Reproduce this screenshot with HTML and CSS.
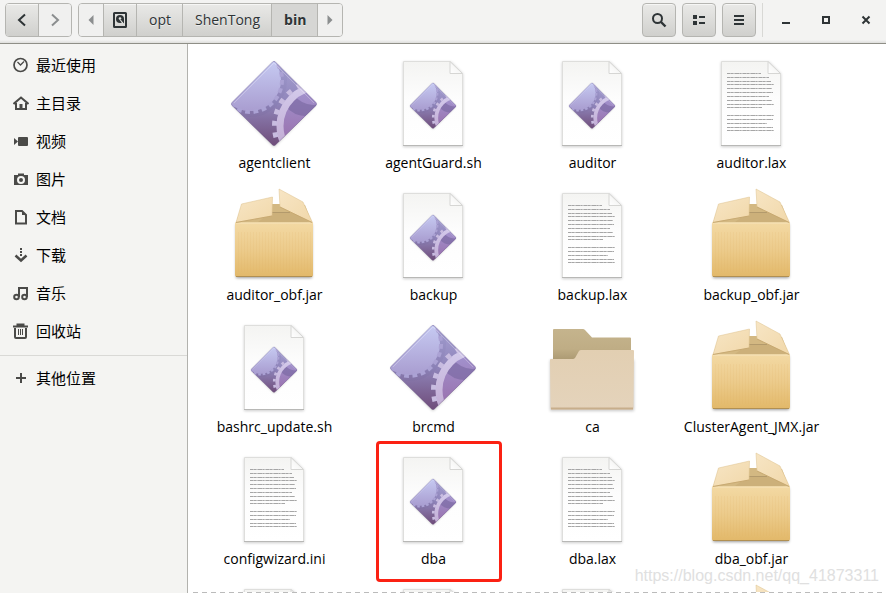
FILE: index.html
```html
<!DOCTYPE html>
<html lang="zh-CN">
<head>
<meta charset="utf-8">
<title>bin</title>
<link rel="stylesheet" href="styles.css">
</head>
<body>
<svg class="sprite" width="0" height="0" aria-hidden="true">
  <defs>
    <linearGradient id="g-dark" x1="0" y1="0" x2="0" y2="1"><stop offset="0" stop-color="#aaa6d8"/><stop offset=".5" stop-color="#8f84b9"/><stop offset="1" stop-color="#6a4470"/></linearGradient>
    <linearGradient id="g-light" x1="0" y1="0" x2="0" y2="1"><stop offset=".2" stop-color="#c6caf2"/><stop offset="1" stop-color="#a99dd0"/></linearGradient>
    <linearGradient id="g-ring" x1="0" y1="0" x2="0" y2="1"><stop offset="0" stop-color="#d3caeb"/><stop offset="1" stop-color="#bda3cd"/></linearGradient>
    <linearGradient id="g-core" x1="0" y1="0" x2="0" y2="1"><stop offset="0" stop-color="#a294cf"/><stop offset="1" stop-color="#96629f"/></linearGradient>
    <linearGradient id="g-paper" x1="0" y1="0" x2="0" y2="1"><stop offset="0" stop-color="#f4f4f2"/><stop offset=".45" stop-color="#fdfdfd"/><stop offset="1" stop-color="#fff"/></linearGradient>
    <linearGradient id="g-fold" x1="0" y1="1" x2="1" y2="0"><stop offset="0" stop-color="#fff"/><stop offset=".5" stop-color="#f6f6f5"/><stop offset="1" stop-color="#ddd"/></linearGradient>
    <linearGradient id="g-box" x1="0" y1="0" x2="0" y2="1"><stop offset="0" stop-color="#f3d9a3"/><stop offset=".5" stop-color="#eccb8b"/><stop offset="1" stop-color="#e2b869"/></linearGradient>
    <linearGradient id="g-flap" x1="0" y1="0" x2="1" y2="1"><stop offset="0" stop-color="#f7e5c4"/><stop offset="1" stop-color="#f1d8aa"/></linearGradient>
    <linearGradient id="g-back" x1="0" y1="0" x2="0" y2="1"><stop offset="0" stop-color="#c5b48d"/><stop offset=".6" stop-color="#bfad85"/><stop offset="1" stop-color="#a8966f"/></linearGradient>
    <linearGradient id="g-front" x1="0" y1="0" x2="0" y2="1"><stop offset="0" stop-color="#e2cfb2"/><stop offset="1" stop-color="#e4d3bb"/></linearGradient>
    <pattern id="corrugated" width="3" height="8" patternUnits="userSpaceOnUse"><path d="M.5 0v8" stroke="#d9ad5e" stroke-opacity=".1"/></pattern>
    <clipPath id="diamond-clip"><path d="M46.500 6Q48 4.500 49.500 6L90 46.500Q91 48 90 49.500L49.500 89Q48 90.500 46.500 89L6 49.500Q5 48 6 46.500Z"/></clipPath>
    <filter id="soft" x="-20%" y="-20%" width="140%" height="140%"><feGaussianBlur stdDeviation="1.5"/></filter>
  </defs>
  <symbol id="program" viewBox="0 0 96 96">
    <path d="M48 6L90 48.500L48 91L6 48.500Z" fill="#000" opacity=".25" filter="url(#soft)"/>
    <g clip-path="url(#diamond-clip)">
      <path d="M0 0h96v96H0z" fill="url(#g-dark)"/>
      <circle cx="24" cy="24" r="37" fill="#5d5090" opacity=".06"/>
      <circle cx="24" cy="24" r="31" fill="url(#g-light)"/>
      <circle cx="24" cy="24" r="32" fill="none" stroke="#aba2d4" stroke-width="4" stroke-dasharray="4.8 3.578"/>
      <circle cx="93" cy="70" r="38" fill="url(#g-core)"/>
      <path d="M59 50Q72 65 94 58V48Q78 52 67 38Z" fill="#77659f" opacity=".6"/>
      <path d="M73 28Q81 40 96 40V20Z" fill="#a99cda"/>
      <circle cx="93" cy="70" r="39" fill="none" stroke="url(#g-ring)" stroke-width="7"/>
      <circle cx="93" cy="70" r="44.500" fill="none" stroke="#c8bce0" stroke-width="5" stroke-dasharray="5 6.650"/>
    </g>
    <path d="M46.500 6Q48 4.500 49.500 6L90 46.500Q91 48 90 49.500L49.500 89Q48 90.500 46.500 89L6 49.500Q5 48 6 46.500Z" fill="none" stroke="#645383" stroke-opacity=".25"/>
    <path d="M8 47L48 7L88 47" fill="none" stroke="#fff" stroke-opacity=".25"/>
  </symbol>
  <symbol id="paper" viewBox="0 0 96 96">
    <path d="M18 6H66L78 18V91H18Z" fill="#000" opacity=".2" filter="url(#soft)"/>
    <path d="M18.500 5.500H65L77.500 18V89.500H18.500Z" fill="url(#g-paper)" stroke="#dededc"/>
    <path d="M18 89.500H78" stroke="#b8b8b6"/>
    <path d="M65 5.500V17.500H77.500Z" fill="url(#g-fold)" stroke="#d6d6d4"/>
  </symbol>
  <symbol id="script" viewBox="0 0 96 96">
    <use href="#paper" width="96" height="96"/>
    <use href="#program" x="22" y="24" width="52" height="52"/>
  </symbol>
  <symbol id="document" viewBox="0 0 96 96">
    <use href="#paper" width="96" height="96"/>
    <g fill="none" stroke="#c2c2c2">
      <path d="M24 17.500h34M24 21.500h42M24 25.500h44M24 28.500h47M24 32.500h45M24 36.500h46M24 40.500h42M24 44.500h45M24 48.500h47M24 51.500h35M24 59.500h47M24 63.500h46M24 67.500h40M24 71.500h46M24 74.500h47"/>
      <path stroke="#a6a6a6" stroke-dasharray="3 1 2 2 4 1 1 2" d="M24 17.500h34M24 21.500h42M24 25.500h44M24 28.500h47M24 32.500h45M24 36.500h46M24 40.500h42M24 44.500h45M24 48.500h47M24 51.500h35M24 59.500h47M24 63.500h46M24 67.500h40M24 71.500h46M24 74.500h47"/>
    </g>
  </symbol>
  <symbol id="package" viewBox="0 0 96 96">
    <path d="M10 36H86V90H10Z" fill="#000" opacity=".4" filter="url(#soft)"/>
    <path d="M16 17L46 16H56L79 17L86 35H10Z" fill="#d3b882"/>
    <path d="M32 34L46 24H66L83 34Z" fill="#ccb07a"/>
    <path d="M44 24.500H64" stroke="#b39a6c"/>
    <path d="M9 34.500H87V87Q87 89 85 89H11Q9 89 9 87Z" fill="url(#g-box)"/>
    <path d="M10 44H86V84H10Z" fill="url(#corrugated)"/>
    <path d="M9.500 35H86.500" stroke="#f7e4bb"/>
    <path d="M10 88.500H86" stroke="#b08f52"/>
    <path d="M15.500 16L46.500 9L46 28L10 34.500Z" fill="url(#g-flap)" stroke="#dcc08d" stroke-width=".5"/>
    <path d="M53 1L77 14L86.500 34.500L54 19Z" fill="url(#g-flap)" stroke="#dcc08d" stroke-width=".5"/>
    <path d="M10 34.500L46 28M54 19L86 34.500" stroke="#c2a26a" stroke-width=".8"/>
  </symbol>
  <symbol id="folder" viewBox="0 0 96 96">
    <path d="M6 40H90V91H6Z" fill="#000" opacity=".22" filter="url(#soft)"/>
    <path d="M9 10Q9 9 10 9H39Q40 9 41 10L48 17.500H86Q87 17.500 87 18.500V42H9Z" fill="url(#g-back)"/>
    <path d="M6 40Q6 39 7 39H29Q30 39 31 38L35 31Q36 30 37 30H89Q90 30 90 31L89.500 88Q89.500 89.500 88 89.500H8Q6.500 89.500 6.500 88Z" fill="url(#g-front)"/>
    <path d="M7 88.500H89" stroke="#c7ae8b" stroke-width="2"/>
  </symbol>
</svg>

<header class="toolbar">
  <div class="group">
    <button class="btn raised" aria-label="后退"><svg width="16" height="16" viewBox="0 0 16 16"><path d="M11 2.500L5 8l6 5.500" fill="none" stroke="#2e3436" stroke-width="2"/></svg></button>
    <button class="btn" aria-label="前进"><svg width="16" height="16" viewBox="0 0 16 16"><path d="M5 2.500L11 8l-6 5.500" fill="none" stroke="#8b8e8f" stroke-width="2"/></svg></button>
  </div>
  <nav class="group path">
    <button class="btn arrow" aria-label="向左"><svg width="16" height="16" viewBox="0 0 16 16"><path d="M10.500 3v10L5.500 8z" fill="#8b8e8f"/></svg></button>
    <button class="btn raised" aria-label="根目录"><svg width="16" height="16" viewBox="0 0 16 16"><rect x="2" y="1" width="12" height="14" rx=".5" fill="none" stroke="#2e3436" stroke-width="2"/><circle cx="8" cy="7" r="4" fill="#2e3436"/><circle cx="8" cy="6.500" r="1.300" fill="#e4e4e2"/><path d="M8 7l4 5V7z" fill="#2e3436"/><path d="M8 7.500l3.500 4.500" stroke="#e4e4e2" stroke-width="1.200"/></svg></button>
    <button class="btn raised text">opt</button>
    <button class="btn raised text">ShenTong</button>
    <button class="btn current text">bin</button>
    <button class="btn arrow" aria-label="向右"><svg width="16" height="16" viewBox="0 0 16 16"><path d="M5.500 3v10l5-5z" fill="#8b8e8f"/></svg></button>
  </nav>
  <div class="tools">
    <button class="btn raised single" aria-label="搜索"><svg width="16" height="16" viewBox="0 0 16 16"><circle cx="6.500" cy="6.500" r="4.500" fill="none" stroke="#2e3436" stroke-width="2"/><path d="M10 10l4.500 4.500" stroke="#2e3436" stroke-width="2.400"/></svg></button>
    <button class="btn raised single" aria-label="列表视图"><svg width="16" height="16" viewBox="0 0 16 16"><path d="M2 3h4v4H2zM2 9h4v4H2zM8 4h6v2H8zM8 10h6v2H8z" fill="#2e3436"/></svg></button>
    <button class="btn raised single" aria-label="菜单"><svg width="16" height="16" viewBox="0 0 16 16"><path d="M3 3h10v2H3zM3 7h10v2H3zM3 11h10v2H3z" fill="#2e3436"/></svg></button>
  </div>
  <div class="window-controls">
    <button class="win" aria-label="最小化"><svg width="16" height="16" viewBox="0 0 16 16"><path d="M4 10h8v2H4z" fill="#2e3436"/></svg></button>
    <button class="win" aria-label="最大化"><svg width="16" height="16" viewBox="0 0 16 16"><path d="M5 5h6v6H5z" fill="none" stroke="#2e3436" stroke-width="2"/></svg></button>
    <button class="win" aria-label="关闭"><svg width="16" height="16" viewBox="0 0 16 16"><path d="M4.500 4.500l7 7M11.500 4.500l-7 7" stroke="#2e3436" stroke-width="2"/></svg></button>
  </div>
</header>

<div class="content">
  <aside class="sidebar">
    <a class="place" href="#"><svg width="16" height="16" viewBox="0 0 16 16"><circle cx="7.500" cy="8" r="6.500" fill="none" stroke="#4a4a48" stroke-width="1.700"/><path d="M4.500 5l3 3L11 4.500" fill="none" stroke="#4a4a48" stroke-width="1.300"/></svg>最近使用</a>
    <a class="place" href="#"><svg width="16" height="16" viewBox="0 0 16 16"><path d="M.5 9L8 2.500L15.500 9" fill="none" stroke="#4a4a48" stroke-width="2"/><path d="M3 8v6h10V8" fill="none" stroke="#4a4a48" stroke-width="2"/><path d="M6.500 9h3v5h-3z" fill="#4a4a48"/></svg>主目录</a>
    <a class="place" href="#"><svg width="16" height="16" viewBox="0 0 16 16"><rect x="5" y="4" width="10" height="9" rx="1" fill="#4a4a48"/><path d="M1 5l4 3.500L1 12z" fill="#4a4a48"/></svg>视频</a>
    <a class="place" href="#"><svg width="16" height="16" viewBox="0 0 16 16"><path d="M1 4h4V2.500h6V4h4v10H1z" fill="#4a4a48"/><circle cx="8" cy="9" r="3" fill="none" stroke="#f4f4f2" stroke-width="2"/></svg>图片</a>
    <a class="place" href="#"><svg width="16" height="16" viewBox="0 0 16 16"><path d="M3 2h6l4 4v8.500H3z" fill="none" stroke="#4a4a48" stroke-width="2"/><path d="M9 2v4h4z" fill="#4a4a48"/></svg>文档</a>
    <a class="place" href="#"><svg width="16" height="16" viewBox="0 0 16 16"><path d="M7 1h2v2H7zM7 4h2v2H7zM7 7h2v2H7z" fill="#4a4a48"/><path d="M2.500 8.500L8 13.500l5.500-5" fill="none" stroke="#4a4a48" stroke-width="2.500"/></svg>下载</a>
    <a class="place" href="#"><svg width="16" height="16" viewBox="0 0 16 16"><g fill="none" stroke="#4a4a48" stroke-width="2"><circle cx="3.500" cy="12" r="2.300"/><circle cx="11.500" cy="12" r="2.300"/><path d="M6 12V3h8v9"/></g></svg>音乐</a>
    <a class="place" href="#"><svg width="16" height="16" viewBox="0 0 16 16"><path d="M0 3.500h15M3.500 1.500h8" stroke="#4a4a48" stroke-width="2"/><path d="M2 5v9q0 1 1 1h9q1 0 1-1V5" fill="none" stroke="#4a4a48" stroke-width="2"/><path d="M5.500 6v6M7.500 6v6M9.500 6v6" stroke="#4a4a48"/></svg>回收站</a>
    <hr class="divider">
    <a class="place" href="#"><svg width="16" height="16" viewBox="0 0 16 16"><path d="M8 3v10M3 8h10" stroke="#4a4a48" stroke-width="2"/></svg>其他位置</a>
  </aside>

  <main class="files">
    <figure class="file"><svg class="icon"><use href="#program"/></svg><figcaption>agentclient</figcaption></figure>
    <figure class="file"><svg class="icon"><use href="#script"/></svg><figcaption>agentGuard.sh</figcaption></figure>
    <figure class="file"><svg class="icon"><use href="#script"/></svg><figcaption>auditor</figcaption></figure>
    <figure class="file"><svg class="icon"><use href="#document"/></svg><figcaption>auditor.lax</figcaption></figure>

    <figure class="file"><svg class="icon"><use href="#package"/></svg><figcaption>auditor_obf.jar</figcaption></figure>
    <figure class="file"><svg class="icon"><use href="#script"/></svg><figcaption>backup</figcaption></figure>
    <figure class="file"><svg class="icon"><use href="#document"/></svg><figcaption>backup.lax</figcaption></figure>
    <figure class="file"><svg class="icon"><use href="#package"/></svg><figcaption>backup_obf.jar</figcaption></figure>

    <figure class="file"><svg class="icon"><use href="#script"/></svg><figcaption>bashrc_update.sh</figcaption></figure>
    <figure class="file"><svg class="icon"><use href="#program"/></svg><figcaption>brcmd</figcaption></figure>
    <figure class="file"><svg class="icon"><use href="#folder"/></svg><figcaption>ca</figcaption></figure>
    <figure class="file"><svg class="icon"><use href="#package"/></svg><figcaption>ClusterAgent_JMX.jar</figcaption></figure>

    <figure class="file"><svg class="icon"><use href="#document"/></svg><figcaption>configwizard.ini</figcaption></figure>
    <figure class="file marked"><svg class="icon"><use href="#script"/></svg><figcaption>dba</figcaption></figure>
    <figure class="file"><svg class="icon"><use href="#document"/></svg><figcaption>dba.lax</figcaption></figure>
    <figure class="file"><svg class="icon"><use href="#package"/></svg><figcaption>dba_obf.jar</figcaption></figure>

    <figure class="file"><svg class="icon"><use href="#paper"/></svg></figure>
    <figure class="file"><svg class="icon"><use href="#paper"/></svg></figure>
    <figure class="file"><svg class="icon"><use href="#paper"/></svg></figure>
    <figure class="file"><svg class="icon"><use href="#package"/></svg></figure>
  </main>
  <div class="watermark">https://blog.csdn.net/qq_41873311</div>
</div>
</body>
</html>
```
FILE: styles.css
```css
*,
*::after {
  box-sizing: border-box;
}

body {
  margin: 0;
  height: 100vh;
  display: flex;
  flex-direction: column;
  overflow: hidden;
  background: #fff;
  color: #000;
  font: 14px/20px "Open Sans", "Noto Sans CJK SC", sans-serif;
}

.sprite {
  position: absolute;
}

.toolbar {
  flex: none;
  display: flex;
  align-items: center;
  gap: 6px;
  padding: 3px 0 6px 5px;
  background: linear-gradient(#f3f3f2 0 40px, #dededc);
  border-bottom: 1px solid #8f8f87;
}

.group {
  display: flex;
  border: 1px solid #b5b5b1;
  border-radius: 4px;
  overflow: hidden;
}

.btn {
  display: flex;
  align-items: center;
  justify-content: center;
  width: 33px;
  height: 32px;
  padding: 0;
  border: 0;
  background: #f0f0ef;
  color: #2e3436;
  font: inherit;
}

.group .btn + .btn {
  border-left: 1px solid #b5b5b1;
}

.group .arrow {
  width: 25px;
}

.group .btn:first-child {
  width: 32px;
}

.path .btn:first-child {
  width: 24px;
}

.btn.raised {
  background: linear-gradient(#e9e9e7, #d0d0cd);
  box-shadow: inset 0 1px #f6f6f5;
}

.group .btn.text {
  width: auto;
  padding: 0 11px 0 12px;
  text-shadow: 0 1px #fff8;
}

.group .btn.current {
  background: #d6d6d4;
  font-weight: bold;
}

.tools {
  display: flex;
  gap: 6px;
  margin-left: auto;
  padding-right: 6px;
  border-right: 1px solid #d8d8d5;
}

.btn.single {
  width: 34px;
  height: 34px;
  border: 1px solid #b5b5b1;
  border-radius: 4px;
}

.window-controls {
  display: flex;
  margin-left: -3px;
}

.win {
  display: flex;
  align-items: center;
  justify-content: center;
  width: 40px;
  height: 34px;
  padding: 0;
  border: 0;
  background: none;
}

.content {
  position: relative;
  flex: 1;
  min-height: 0;
  display: flex;
}

.sidebar {
  flex: none;
  width: 188px;
  padding-top: 2px;
  background: #f4f4f2;
  border-right: 1px solid #b2b2ae;
}

.place {
  display: flex;
  align-items: center;
  gap: 7px;
  height: 38px;
  padding-left: 13px;
  color: #000;
  font-size: 15px;
  text-decoration: none;
}

.divider {
  height: 1px;
  margin: 5px 0 3px;
  border: 0;
  background: #d9d9d6;
}

.files {
  flex: 1;
  display: grid;
  grid-template-columns: repeat(auto-fill, 159px);
  align-content: start;
  padding: 4px 7px 0;
  overflow: hidden;
}

.file {
  position: relative;
  display: flex;
  flex-direction: column;
  align-items: center;
  gap: 1px;
  margin: 0;
  padding: 8px 0 7px;
}

.icon {
  width: 96px;
  height: 96px;
  margin-right: 1px;
}

.marked::after {
  content: "";
  position: absolute;
  top: -3px;
  left: 22px;
  width: 126px;
  height: 141px;
  border: 3px solid #fb2113;
  border-radius: 4px;
}

.content::after {
  content: "";
  position: absolute;
  right: 0;
  bottom: 0;
  left: 193px;
  height: 1px;
  background: repeating-linear-gradient(90deg, #bbb 0 5px, #fff 5px 9px);
}

.watermark {
  position: absolute;
  right: 7px;
  bottom: 9px;
  color: #e0e0e0;
  font: 16px/16px "Liberation Sans", sans-serif;
}
```
